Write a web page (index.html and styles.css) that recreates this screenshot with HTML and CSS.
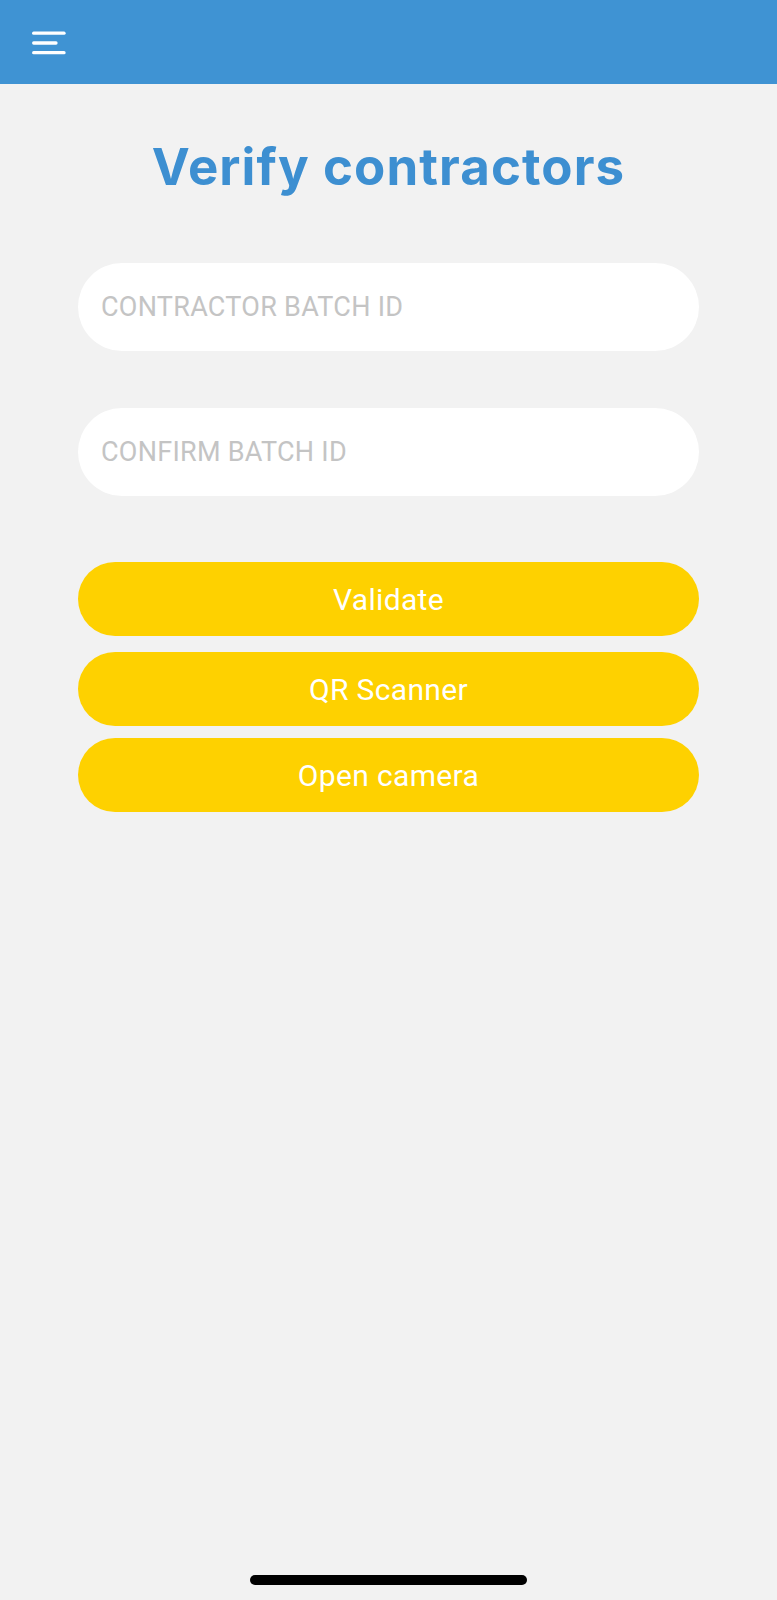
FILE: index.html
```html
<!DOCTYPE html>
<html lang="en">
<head>
<meta charset="utf-8">
<title>Verify contractors</title>
<link rel="stylesheet" href="styles.css">
</head>
<body>
<header class="topbar">
  <button class="menu-btn" aria-label="Menu">
    <svg width="36" height="24" viewBox="0 0 36 24">
      <line x1="1.7" y1="2.2" x2="32" y2="2.2" stroke="#fff" stroke-width="3.3" stroke-linecap="round"/>
      <line x1="1.7" y1="12" x2="24" y2="12" stroke="#fff" stroke-width="3.3" stroke-linecap="round"/>
      <line x1="1.7" y1="21.7" x2="32" y2="21.7" stroke="#fff" stroke-width="3.3" stroke-linecap="round"/>
    </svg>
  </button>
</header>
<main class="content">
  <h1 class="title">Verify contractors</h1>
  <form class="form">
    <div class="fields">
      <input class="field" type="text" placeholder="CONTRACTOR BATCH ID">
      <input class="field" type="text" placeholder="CONFIRM BATCH ID">
    </div>
    <div class="actions">
      <button type="button" class="btn">Validate</button>
      <button type="button" class="btn btn-qr">QR Scanner</button>
      <button type="button" class="btn btn-cam">Open camera</button>
    </div>
  </form>
</main>
<div class="home-indicator"></div>
</body>
</html>
```

FILE: styles.css
```css
* { box-sizing: border-box; }
html, body {
  margin: 0;
  padding: 0;
}
body {
  width: 777px;
  height: 1600px;
  background: #f2f2f2;
  font-family: Roboto, "Liberation Sans", sans-serif;
  position: relative;
  overflow: hidden;
}
.topbar {
  height: 84px;
  background: #3f93d3;
  display: flex;
  align-items: flex-start;
  padding: 31px 0 0 32px;
}
.menu-btn {
  background: none;
  border: 0;
  padding: 0;
  margin: 0;
  width: 36px;
  height: 24px;
  display: block;
}
.menu-btn svg { display: block; }
.content {
  padding: 0 78px;
}
.title {
  margin: 52px 0 0;
  font-family: Inter, "Liberation Sans", sans-serif;
  font-weight: 700;
  font-size: 51px;
  line-height: 62px;
  text-align: center;
  color: #3d8fd1;
  letter-spacing: 1.1px;
}
.form {
  margin-top: 65px;
}
.fields {
  display: flex;
  flex-direction: column;
  gap: 57px;
}
.field {
  display: block;
  width: 100%;
  height: 88px;
  border: 0;
  border-radius: 44px;
  background: #fff;
  padding: 0 23px;
  font-family: Roboto, "Liberation Sans", sans-serif;
  font-size: 27px;
  letter-spacing: 0.27px;
  color: #333;
  outline: none;
}
.field::placeholder {
  color: #c4c4c4;
}
.actions {
  margin-top: 66px;
  display: flex;
  flex-direction: column;
  gap: 16px;
}
.btn {
  display: block;
  width: 100%;
  height: 74px;
  border: 0;
  border-radius: 37px;
  background: #fed100;
  color: #fff;
  font-family: Roboto, "Liberation Sans", sans-serif;
  font-size: 30px;
  letter-spacing: 0.35px;
  padding: 0;
}
.btn-cam {
  margin-top: -4px;
}
.home-indicator {
  position: absolute;
  left: 250px;
  top: 1575px;
  width: 277px;
  height: 10px;
  border-radius: 5px;
  background: #000;
}
```
